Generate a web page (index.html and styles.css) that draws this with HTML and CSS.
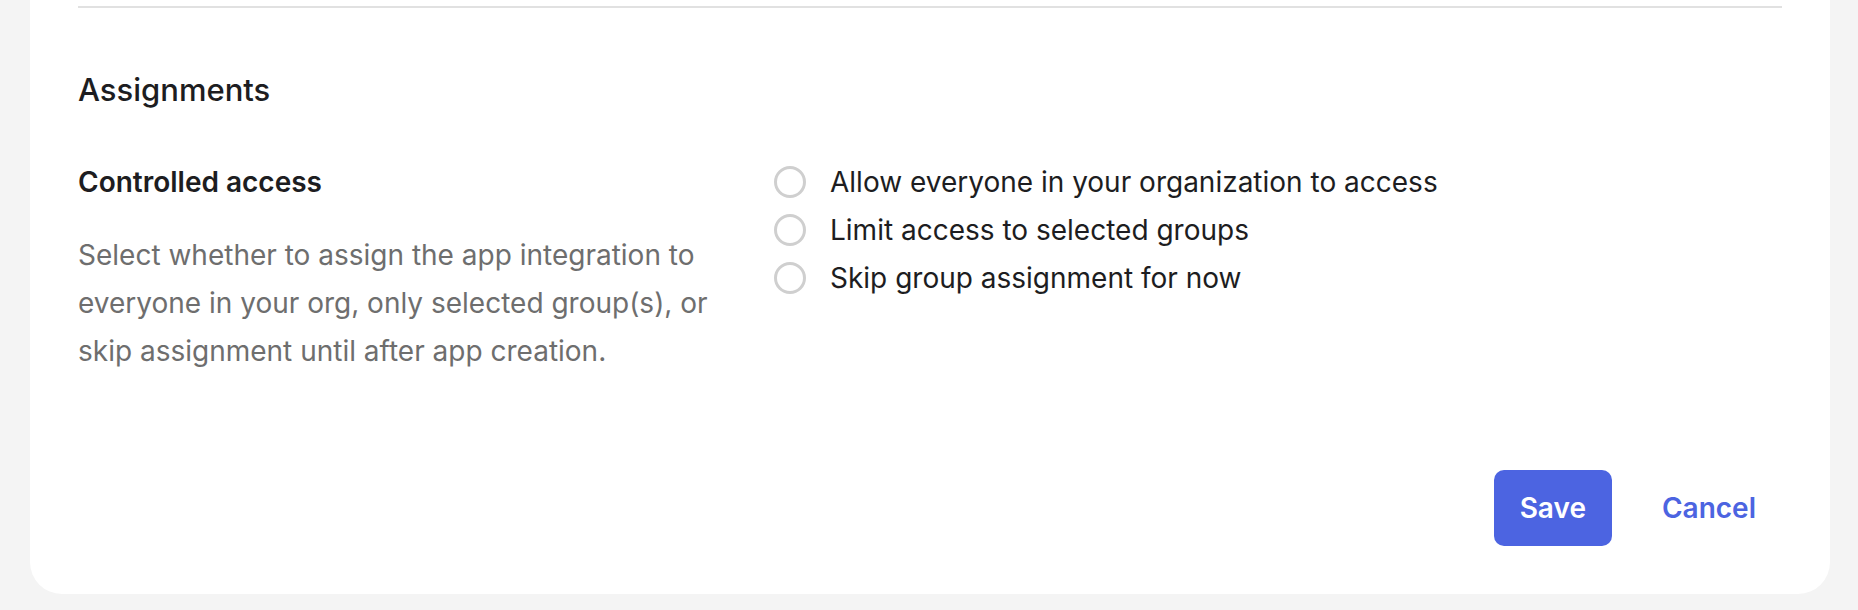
FILE: index.html
```html
<!DOCTYPE html>
<html lang="en">
<head>
<meta charset="utf-8">
<title>Assignments</title>
<link rel="stylesheet" href="styles.css">
</head>
<body>
<div class="card">
  <hr class="divider">
  <h2 class="section-title">Assignments</h2>
  <div class="field">
    <div class="field-info">
      <div class="field-label">Controlled access</div>
      <p class="field-desc">Select whether to assign the app integration to everyone in your org, only selected group(s), or skip assignment until after app creation.</p>
    </div>
    <div class="radio-group">
      <label class="radio"><span class="radio-circle"></span><span class="radio-text">Allow everyone in your organization to access</span></label>
      <label class="radio"><span class="radio-circle"></span><span class="radio-text">Limit access to selected groups</span></label>
      <label class="radio"><span class="radio-circle"></span><span class="radio-text">Skip group assignment for now</span></label>
    </div>
  </div>
  <div class="actions">
    <button class="btn btn-primary">Save</button>
    <button class="btn btn-link">Cancel</button>
  </div>
</div>
</body>
</html>
```
FILE: styles.css
```css
html, body {
  margin: 0;
  padding: 0;
  background: #f4f4f4;
  font-family: Inter, "Noto Sans", sans-serif;
  color: #1d1d21;
}
.card {
  margin: 0 28px 0 30px;
  background: #ffffff;
  border-radius: 0 0 32px 32px;
  padding: 6px 48px 48px 48px;
  height: 594px;
  box-sizing: border-box;
  display: flex;
  flex-direction: column;
}
.divider {
  margin: 0;
  border: 0;
  height: 2px;
  background: #e1e1e1;
}
.section-title {
  margin: 62px 0 0 0;
  font-size: 31px;
  line-height: 40px;
  font-weight: 500;
  color: #1d1d21;
}
.field {
  margin-top: 48px;
  display: grid;
  grid-template-columns: 648px 1fr;
  column-gap: 48px;
}
.field-label {
  font-size: 28px;
  line-height: 48px;
  font-weight: 600;
  color: #1d1d21;
}
.field-desc {
  margin: 25px 0 0 0;
  font-size: 28px;
  line-height: 48px;
  color: #6e6e6e;
}
.radio-group {
  display: flex;
  flex-direction: column;
}
.radio {
  display: flex;
  align-items: center;
  gap: 24px;
  height: 48px;
  font-size: 28px;
  line-height: 48px;
  color: #1d1d21;
}
.radio-circle {
  width: 32px;
  height: 32px;
  box-sizing: border-box;
  border: 3px solid #cfcfcf;
  border-radius: 50%;
  flex: none;
}
.actions {
  margin-top: auto;
  display: flex;
  justify-content: flex-end;
  gap: 24px;
}
.btn {
  font-family: Inter, "Noto Sans", sans-serif;
  font-size: 28px;
  font-weight: 600;
  height: 76px;
  padding: 0 26px;
  border-radius: 10px;
  border: 0;
  cursor: pointer;
}
.btn-primary {
  background: #4c64e1;
  color: #ffffff;
}
.btn-link {
  background: transparent;
  color: #4c64e1;
}
```
